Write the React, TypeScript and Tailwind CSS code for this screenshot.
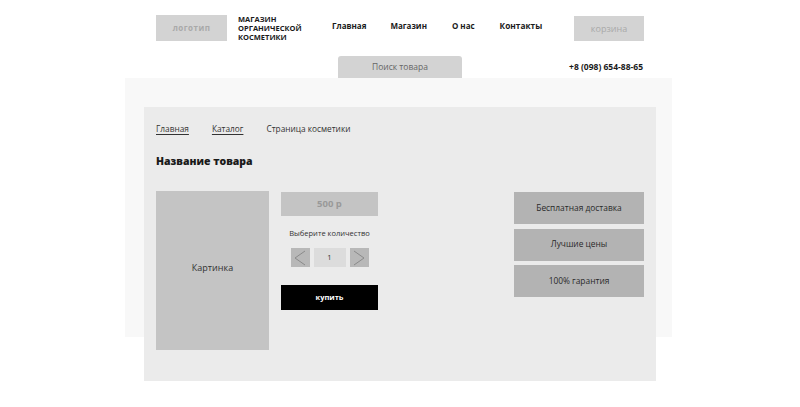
import React, { useState } from 'react';

const navItems = ['Главная', 'Магазин', 'О нас', 'Контакты'];
const perks = ['Бесплатная доставка', 'Лучшие цены', '100% гарантия'];

const Chevron: React.FC<{ dir: 'left' | 'right' }> = ({ dir }) => (
  <svg width="12" height="16" viewBox="0 0 12 16" fill="none">
    <polyline
      points={dir === 'left' ? '11,1 1,8 11,15' : '1,1 11,8 1,15'}
      stroke="#8a8a8a"
      strokeWidth="1"
    />
  </svg>
);

const App: React.FC = () => {
  const [qty, setQty] = useState<number>(1);

  return (
    <div className="min-h-[407px] bg-white text-[#1a1a1a] font-['Open_Sans','Liberation_Sans',sans-serif]">
      {/* шапка */}
      <header className="w-[488px] mx-auto pt-[15px]">
        <div className="flex items-start">
          <div className="w-[71px] h-[26px] bg-[#d3d3d3] flex items-center justify-center text-[8px] font-bold text-[#a9a9a9] tracking-[0.06em]">
            логотип
          </div>
          <div className="ml-[11px] w-[80px] text-[7.5px] leading-[9px] font-bold uppercase">
            Магазин<br />органической<br />косметики
          </div>
          <nav className="flex ml-[14px] mt-[5px] text-[8px] font-bold">
            <a className="mr-[24px]">{navItems[0]}</a>
            <a className="mr-[25px]">{navItems[1]}</a>
            <a className="mr-[25px]">{navItems[2]}</a>
            <a className="text-[8.3px]">{navItems[3]}</a>
          </nav>
          <div className="ml-auto mt-px w-[70px] h-[25px] bg-[#d3d3d3] flex items-center justify-center text-[9px] text-[#a9a9a9]">
            корзина
          </div>
        </div>
        <div className="flex items-center mt-[14px]">
          <div className="ml-[182px] w-[124px] h-[22px] rounded-t-[3px] bg-[#d3d3d3] flex items-center justify-center text-[8.5px] text-[#666]">
            Поиск товара
          </div>
          <span className="ml-auto mr-px text-[8.5px] font-bold">+8 (098) 654-88-65</span>
        </div>
      </header>

      {/* страница товара */}
      <div className="w-[547px] h-[259px] ml-[125px] bg-[#f8f8f8] pt-[29px] pl-[19px]">
        <div className="w-[512px] h-[274px] bg-[#ebebeb] pl-[12px] pt-[16px]">
          <div className="flex text-[8.3px] text-[#333]">
            <a className="underline underline-offset-2">Главная</a>
            <a className="ml-[23px] underline underline-offset-2">Каталог</a>
            <span className="ml-[23px]">Страница косметики</span>
          </div>
          <h1 className="mt-[19px] text-[10.5px] font-extrabold">Название товара</h1>

          <div className="flex mt-[21px]">
            <div className="w-[113px] h-[159px] bg-[#c4c4c4] flex items-center justify-center pb-[6px] text-[9px] text-[#333]">
              Картинка
            </div>

            <div className="ml-[12px] w-[97px] flex flex-col items-center">
              <div className="w-full h-[24px] mt-px bg-[#c4c4c4] flex items-center justify-center text-[9.5px] font-bold text-[#999]">
                500 р
              </div>
              <p className="mt-[12px] text-[7.5px] text-[#333]">Выберите количество</p>
              <div className="flex mt-[9px] gap-[4px]">
                <button
                  className="w-[19px] h-[19px] bg-[#b8b8b8] flex items-center justify-center"
                  onClick={() => setQty(Math.max(1, qty - 1))}
                >
                  <Chevron dir="left" />
                </button>
                <div className="w-[32px] h-[19px] bg-[#dcdcdc] flex items-center justify-center text-[7.5px] text-[#333]">
                  {qty}
                </div>
                <button
                  className="w-[19px] h-[19px] bg-[#b8b8b8] flex items-center justify-center"
                  onClick={() => setQty(qty + 1)}
                >
                  <Chevron dir="right" />
                </button>
              </div>
              <button className="w-full h-[25px] mt-[18px] bg-black text-white text-[7.5px] font-bold">
                купить
              </button>
            </div>

            <div className="ml-auto mr-[12px] w-[130px] flex flex-col gap-[4.5px] mt-px">
              {perks.map((p) => (
                <div
                  key={p}
                  className="h-[32px] bg-[#b3b3b3] flex items-center justify-center text-[8.4px] text-[#2a2a2a]"
                >
                  {p}
                </div>
              ))}
            </div>
          </div>
        </div>
      </div>
    </div>
  );
};

export default App;
